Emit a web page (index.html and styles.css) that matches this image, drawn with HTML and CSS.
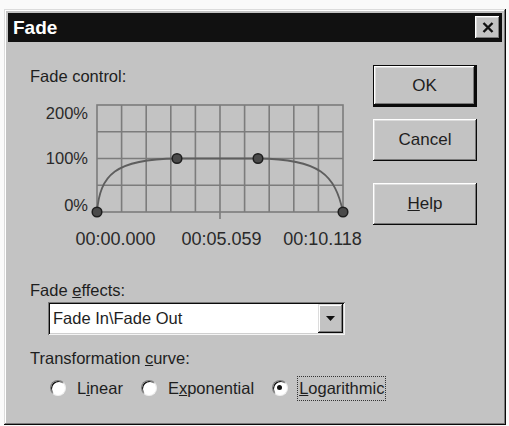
FILE: index.html
```html
<!DOCTYPE html>
<html lang="en">
<head>
    <meta charset="UTF-8">
    <title>Fade</title>
    <link rel="stylesheet" href="styles.css">
</head>
<body>
<div class="dialog">
    <div class="titlebar">
        <span class="title">Fade</span>
        <div class="close">
            <svg width="12" height="11" viewBox="0 0 12 11">
                <path d="M1.5 1 L10.5 10 M10.5 1 L1.5 10" stroke="#111" stroke-width="2.4" fill="none"/>
            </svg>
        </div>
    </div>
    <div class="content">
        <div class="top">
            <div class="control">
                <div class="label control-label">Fade control:</div>
                <svg class="graph" width="340" height="155" viewBox="0 0 340 155">
                    <!-- grid: 10 columns, 4 rows -->
                    <g stroke="#7c7c7c" stroke-width="1.6" fill="none">
                        <rect x="67" y="10" width="246" height="107"/>
                        <path d="M67 36.75 H313 M67 63.5 H313 M67 90.25 H313"/>
                        <path d="M91.6 10 V117 M116.2 10 V117 M140.8 10 V117 M165.4 10 V117 M190 10 V124 M214.6 10 V117 M239.2 10 V117 M263.8 10 V117 M288.4 10 V117"/>
                    </g>
                    <!-- fade curve -->
                    <path d="M67 117 C70 80 85 64 147 63.5 L228 63.5 C290 64 305 80 313 117" stroke="#5e5e5e" stroke-width="1.8" fill="none"/>
                    <g fill="#4a4a4a" stroke="#1e1e1e" stroke-width="1.5">
                        <circle cx="67" cy="117" r="4.8"/>
                        <circle cx="147" cy="63.5" r="4.8"/>
                        <circle cx="228" cy="63.5" r="4.8"/>
                        <circle cx="313" cy="117" r="4.8"/>
                    </g>
                    <g class="axis" text-anchor="end">
                        <text x="58" y="24">200%</text>
                        <text x="58" y="69">100%</text>
                        <text x="58" y="116">0%</text>
                    </g>
                    <g class="axis time" text-anchor="middle">
                        <text x="85.5" y="149.5">00:00.000</text>
                        <text x="191.5" y="149.5">00:05.059</text>
                        <text x="292.5" y="149.5">00:10.118</text>
                    </g>
                </svg>
            </div>
            <div class="buttons">
                <div class="btn default">OK</div>
                <div class="btn">Cancel</div>
                <div class="btn help"><u>H</u>elp</div>
            </div>
        </div>
        <div class="label effects-label">Fade <u>e</u>ffects:</div>
        <div class="combo">
            <span class="combo-text">Fade In\Fade Out</span>
            <span class="combo-btn">
                <svg width="9" height="5" viewBox="0 0 9 5"><path d="M0 0 H9 L4.5 5 Z" fill="#111"/></svg>
            </span>
        </div>
        <div class="label curve-label">Transformation <u>c</u>urve:</div>
        <div class="radios">
            <div class="radio-item">
                <span class="radio"></span>
                <span>L<u>i</u>near</span>
            </div>
            <div class="radio-item">
                <span class="radio"></span>
                <span>E<u>x</u>ponential</span>
            </div>
            <div class="radio-item">
                <span class="radio on"></span>
                <span class="focus"><u>L</u>ogarithmic</span>
            </div>
        </div>
    </div>
</div>
</body>
</html>
```

FILE: styles.css
```css
* {
    margin: 0;
    padding: 0;
}
body {
    background: #fafafa;
    font-family: "Liberation Sans", Arial, sans-serif;
    color: #1e1e1e;
}
.dialog {
    width: 502px;
    height: 416px;
    margin: 9px 0 0 4px;
    padding: 4px;
    box-sizing: border-box;
    background: #c3c3c3;
    box-shadow: inset -1px -1px #0a0a0a, inset 1px 1px #dcdcdc, inset -2px -2px #7a7a7a, inset 2px 2px #fff;
}
.titlebar {
    height: 29px;
    background: #111;
    display: flex;
    align-items: center;
    justify-content: space-between;
    padding: 0 2px 0 5px;
}
.title {
    color: #fff;
    font-weight: bold;
    font-size: 19px;
}
.close {
    width: 25px;
    height: 23px;
    background: #c3c3c3;
    display: flex;
    align-items: center;
    justify-content: center;
    box-shadow: inset -1px -1px #0a0a0a, inset 1px 1px #fff, inset -2px -2px #7a7a7a, inset 2px 2px #dcdcdc;
}
.content {
    padding: 23px 25px 0 22px;
}
.top {
    display: flex;
    justify-content: space-between;
}
.label {
    font-size: 16.5px;
    line-height: 18px;
}
.control-label {
    margin-top: 2px;
}
.graph {
    display: block;
    margin-top: 10px;
}
.axis text {
    font-family: "Liberation Sans", Arial, sans-serif;
    font-size: 16.5px;
    fill: #2a2a2a;
}
.axis.time text {
    font-size: 18px;
}
.buttons {
    width: 104px;
    display: flex;
    flex-direction: column;
    gap: 12px;
}
.btn {
    height: 42px;
    box-sizing: border-box;
    display: flex;
    align-items: center;
    justify-content: center;
    font-size: 17px;
    background: #c3c3c3;
    box-shadow: inset -1px -1px #0a0a0a, inset 1px 1px #fff, inset -2px -2px #7a7a7a, inset 2px 2px #dcdcdc;
}
.btn.default {
    border: 1px solid #0a0a0a;
    border-width: 1px 2px 2px 1px;
}
.btn.help {
    margin-top: 10px;
}
.effects-label {
    margin-top: 31px;
}
.combo {
    width: 297px;
    height: 33px;
    margin: 3px 0 0 18px;
    padding: 2px;
    box-sizing: border-box;
    display: flex;
    align-items: stretch;
    background: #fff;
    box-shadow: inset 1px 1px #7a7a7a, inset -1px -1px #f4f4f4, inset 2px 2px #0a0a0a, inset -2px -2px #cfcfcf;
}
.combo-text {
    flex: 1;
    font-size: 16.5px;
    line-height: 29px;
    padding-left: 3px;
}
.combo-btn {
    width: 25px;
    display: flex;
    align-items: center;
    justify-content: center;
    background: #c3c3c3;
    box-shadow: inset -1px -1px #0a0a0a, inset 1px 1px #dcdcdc, inset -2px -2px #7a7a7a, inset 2px 2px #fff;
}
.curve-label {
    margin-top: 14px;
}
.radios {
    display: flex;
    align-items: center;
    height: 24px;
    margin: 9px 0 0 20px;
    font-size: 16.5px;
}
.radio-item {
    display: flex;
    align-items: center;
    gap: 11px;
    margin-right: 18px;
}
.radio {
    position: relative;
    width: 16px;
    height: 16px;
    box-sizing: border-box;
    border-radius: 50%;
    background: #fff;
    border: 1px solid;
    border-color: #7a7a7a #eee #eee #7a7a7a;
    box-shadow: inset 1px 1px #0a0a0a;
}
.radio.on::after {
    content: "";
    position: absolute;
    left: 4px;
    top: 4px;
    width: 5px;
    height: 5px;
    border-radius: 50%;
    background: #111;
}
.focus {
    border: 1px dotted #333;
    padding: 2px 1px;
    margin-left: -2px;
}
```
